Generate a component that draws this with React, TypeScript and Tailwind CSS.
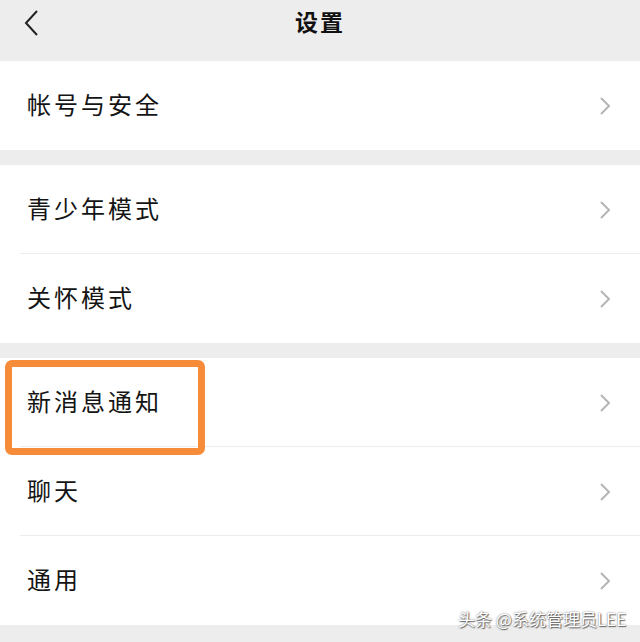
import React from "react";

const font = { fontFamily: '"Noto Sans CJK SC", "Noto Sans", sans-serif' };

function Chevron() {
  return (
    <svg width="14" height="20" viewBox="0 0 14 20" className="shrink-0">
      <path d="M3 2 L11 10 L3 18" fill="none" stroke="#b5b5b5" strokeWidth="2" />
    </svg>
  );
}

function Row({ label, h, divider }: { label: string; h: string; divider?: boolean }) {
  return (
    <div className={`relative flex items-center justify-between pl-[27px] pr-[28px] ${h}`}>
      <span className="mb-[3px] text-[24px] tracking-[3px] text-[#141414]">{label}</span>
      <Chevron />
      {divider && <div className="absolute bottom-0 left-[20px] right-0 h-px bg-[#ececec]" />}
    </div>
  );
}

export default function App() {
  return (
    <div className="relative w-[640px] h-[642px] overflow-hidden bg-[#ededed]" style={font}>
      <div className="relative flex h-[61px] items-center justify-center">
        <svg width="20" height="28" viewBox="0 0 20 28" className="absolute left-[22px] top-[9px]">
          <path d="M15 2 L4 14 L15 26" fill="none" stroke="#222" strokeWidth="2" />
        </svg>
        <span className="mb-[18px] text-[23px] font-bold tracking-[2px] text-[#111]">设置</span>
      </div>
      <div className="bg-white">
        <Row label="帐号与安全" h="h-[89px]" />
      </div>
      <div className="h-[15px]" />
      <div className="bg-white">
        <Row label="青少年模式" h="h-[89px]" divider />
        <Row label="关怀模式" h="h-[89px]" />
      </div>
      <div className="h-[15px]" />
      <div className="bg-white">
        <Row label="新消息通知" h="h-[89px]" divider />
        <Row label="聊天" h="h-[89px]" divider />
        <Row label="通用" h="h-[89px]" />
      </div>
      <div className="absolute left-[5px] top-[360px] h-[95px] w-[200px] rounded-[7px] border-[7px] border-[#f68c3a]" />
      <div
        className="absolute left-[458px] top-[606px] text-[17px] text-white"
        style={{ textShadow: "0 0 2px rgba(0,0,0,0.6), 1px 1px 1px rgba(0,0,0,0.5)" }}
      >
        头条 @系统管理员LEE
      </div>
    </div>
  );
}
